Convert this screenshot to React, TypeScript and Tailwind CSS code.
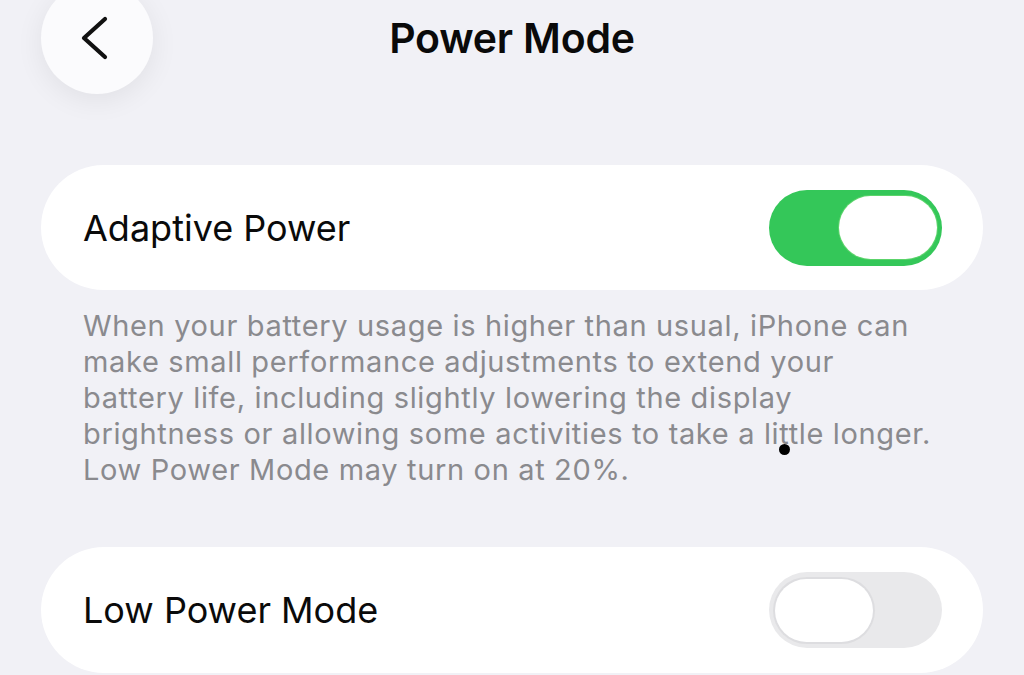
import React, { useState } from 'react';

const Toggle = ({ on, onChange }: { on: boolean; onChange: () => void }) => (
  <button
    onClick={onChange}
    className={`w-[173px] h-[76px] rounded-full flex items-center px-[6px] transition-colors ${
      on ? 'bg-[#34c759] justify-end pr-[5px]' : 'bg-[#e9e9eb] justify-start'
    }`}
  >
    <span
      className={`block w-[98px] h-[63px] rounded-full bg-white ${
        on ? 'shadow-[0_0_0_1px_rgba(120,220,120,0.6)]' : 'shadow-[0_0_0_2px_rgba(200,200,204,0.35)]'
      }`}
    />
  </button>
);

const lines = [
  'When your battery usage is higher than usual, iPhone can',
  'make small performance adjustments to extend your',
  'battery life, including slightly lowering the display',
  'brightness or allowing some activities to take a little longer.',
  'Low Power Mode may turn on at 20%.',
];

export default function App() {
  const [adaptive, setAdaptive] = useState(true);
  const [lowPower, setLowPower] = useState(false);

  return (
    <div
      className="relative w-full h-[675px] overflow-hidden bg-[#f1f1f6]"
      style={{ fontFamily: 'Inter, "Noto Sans", sans-serif' }}
    >
      {/* header */}
      <div className="-mt-[18px] h-[112px] grid grid-cols-[1fr_auto_1fr] items-center">
        <div className="pl-[41px]">
          <button className="w-[112px] h-[112px] rounded-full bg-[#fbfbfd] shadow-[0_6px_28px_rgba(0,0,0,0.07)] flex items-center justify-center">
            <svg width="40" height="48" viewBox="0 0 40 48" fill="none" className="-ml-[6px]">
              <polyline
                points="31,5 10,24 31,43"
                stroke="#111"
                strokeWidth="4.2"
                strokeLinecap="round"
                strokeLinejoin="round"
              />
            </svg>
          </button>
        </div>
        <h1 className="text-[41px] leading-none font-semibold tracking-[-0.2px] text-[#0a0a0a]">Power Mode</h1>
        <div />
      </div>

      <div className="mx-[41px] mt-[71px]">
        <div className="h-[125px] rounded-full bg-white flex items-center justify-between pl-[42px] pr-[41px]">
          <span className="text-[36px] text-[#0a0a0a]">Adaptive Power</span>
          <Toggle on={adaptive} onChange={() => setAdaptive(!adaptive)} />
        </div>

        <div className="pl-[42px] pt-[18px] text-[29px] tracking-[0.65px] leading-[36px] text-[#8a8a8e]">
          {lines.map((l) => (
            <div key={l} className="whitespace-nowrap">{l}</div>
          ))}
        </div>

        <div className="mt-[59px] h-[126px] rounded-full bg-white flex items-center justify-between pl-[42px] pr-[41px]">
          <span className="text-[36px] text-[#0a0a0a]">Low Power Mode</span>
          <Toggle on={lowPower} onChange={() => setLowPower(!lowPower)} />
        </div>
      </div>

      <span className="absolute left-[779px] top-[444px] w-[11px] h-[11px] rounded-full bg-black" />
    </div>
  );
}
